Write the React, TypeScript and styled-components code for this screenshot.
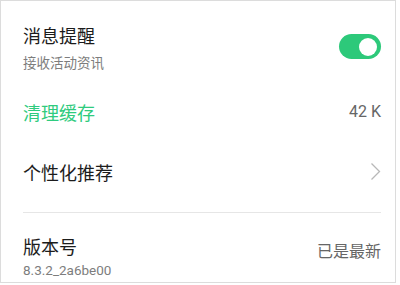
import React from 'react';
import styled, { createGlobalStyle } from 'styled-components';

const Global = createGlobalStyle`
  html, body {
    margin: 0;
    padding: 0;
    background: #ffffff;
  }
  body {
    font-family: Roboto, "Noto Sans CJK SC", "Noto Sans", sans-serif;
  }
`;

const Panel = styled.div`
  width: 396px;
  height: 283px;
  box-sizing: border-box;
  border: 1px solid #dcdcdc;
  background: #ffffff;
  padding: 0 14px 0 22px;
  overflow: hidden;
`;

const Row = styled.div<{ $h: number; $top?: number }>`
  display: flex;
  align-items: ${(p) => (p.$top !== undefined ? 'flex-start' : 'center')};
  justify-content: space-between;
  height: ${(p) => p.$h}px;
  box-sizing: border-box;
  padding-top: ${(p) => p.$top ?? 0}px;
`;

const Texts = styled.div<{ $gap: number }>`
  display: flex;
  flex-direction: column;
  gap: ${(p) => p.$gap}px;
`;

const Title = styled.div<{ $green?: boolean }>`
  font-family: "Noto Sans CJK SC", sans-serif;
  font-size: 18px;
  line-height: 24px;
  color: ${(p) => (p.$green ? '#2fcb7e' : '#1c1c1c')};
`;

const Sub = styled.div`
  font-family: Roboto, "Noto Sans CJK SC", sans-serif;
  font-size: 13.5px;
  line-height: 20px;
  color: #7d7d7d;
`;

const Value = styled.div<{ $size: number; $offset?: number }>`
  font-family: Roboto, "Noto Sans CJK SC", sans-serif;
  font-size: ${(p) => p.$size}px;
  line-height: 22px;
  color: #666666;
  margin-top: ${(p) => p.$offset ?? 0}px;
`;

const Toggle = styled.div`
  width: 42px;
  height: 25px;
  border-radius: 13px;
  background: #2dc97a;
  display: flex;
  align-items: center;
  justify-content: flex-end;
  padding-right: 4px;
  box-sizing: border-box;
  margin-top: 11.5px;
`;

const Knob = styled.div`
  width: 18px;
  height: 18px;
  border-radius: 50%;
  background: #ffffff;
`;

const Divider = styled.div`
  height: 1px;
  background: #e6e6e6;
  margin-top: 11px;
`;

const Chevron = () => (
  <svg width="11" height="19" viewBox="0 0 11 19">
    <polyline points="1.5,1.5 9.5,9.5 1.5,17.5" fill="none" stroke="#b8b8b8" strokeWidth="1.3" />
  </svg>
);

export default function App() {
  return (
    <>
      <Global />
      <Panel>
        <Row $h={81} $top={21.5}>
          <Texts $gap={6}>
            <Title>消息提醒</Title>
            <Sub>接收活动资讯</Sub>
          </Texts>
          <Toggle>
            <Knob />
          </Toggle>
        </Row>
        <Row $h={60}>
          <Title $green>清理缓存</Title>
          <Value $size={16}>42 K</Value>
        </Row>
        <Row $h={59}>
          <Title>个性化推荐</Title>
          <Chevron />
        </Row>
        <Divider />
        <Row $h={70} $top={20.5}>
          <Texts $gap={2}>
            <Title>版本号</Title>
            <Sub>8.3.2_2a6be00</Sub>
          </Texts>
          <Value $size={16} $offset={7.5}>已是最新</Value>
        </Row>
      </Panel>
    </>
  );
}
